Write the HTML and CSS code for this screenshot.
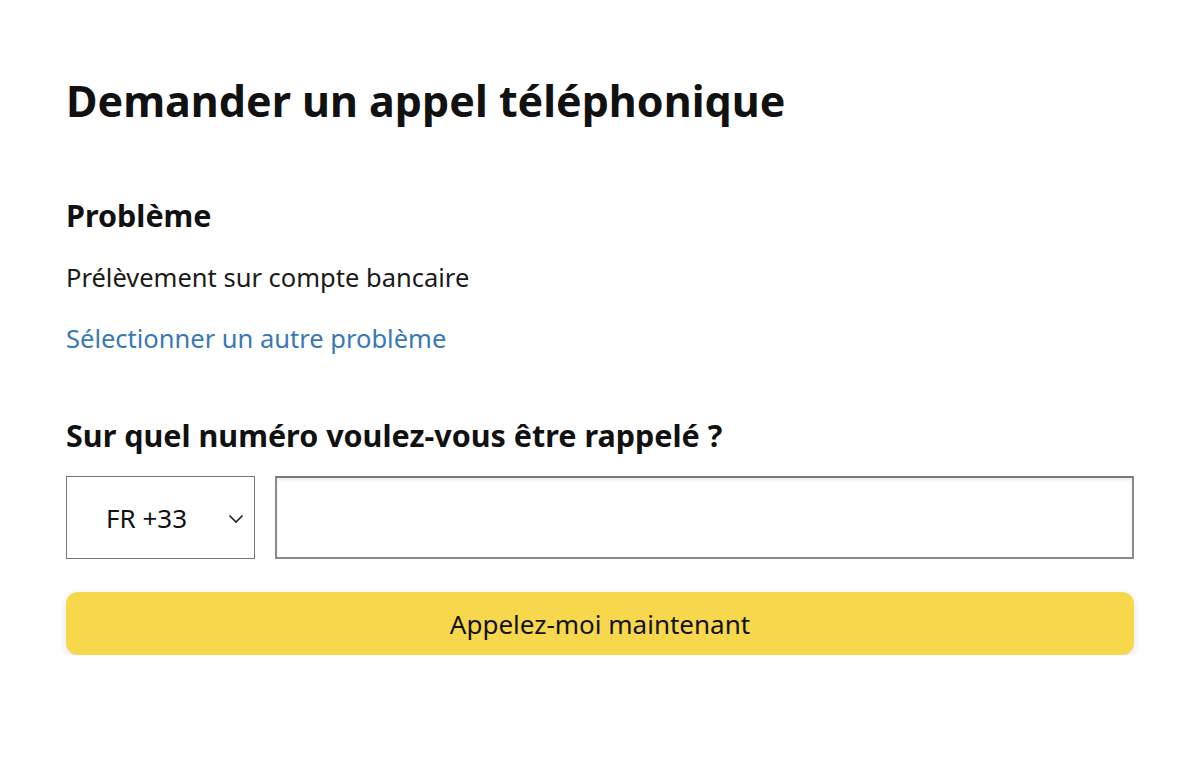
FILE: index.html
```html
<!DOCTYPE html>
<html lang="fr">
<head>
<meta charset="utf-8">
<link rel="stylesheet" href="styles.css">
</head>
<body>
<main class="page">
  <h1 class="title">Demander un appel téléphonique</h1>
  <section class="problem">
    <h2 class="subtitle">Problème</h2>
    <p class="text">Prélèvement sur compte bancaire</p>
    <a class="link" href="#">Sélectionner un autre problème</a>
  </section>
  <section class="phone">
    <h2 class="question">Sur quel numéro voulez-vous être rappelé ?</h2>
    <div class="row">
      <div class="select">
        <span class="code">FR +33</span>
        <svg class="chev" width="16" height="10" viewBox="0 0 16 10"><path d="M1.5 1.5 L8 8 L14.5 1.5" fill="none" stroke="#222" stroke-width="1.6"/></svg>
      </div>
      <div class="input"></div>
    </div>
    <button class="btn">Appelez-moi maintenant</button>
  </section>
</main>
</body>
</html>
```
FILE: styles.css
```css
* { box-sizing: border-box; }
html, body { margin: 0; padding: 0; background: #fff; }
body { font-family: "Noto Sans", "Open Sans", sans-serif; color: #111; }
.page { padding: 74px 66px 0 66px; width: 1200px; }
.title { margin: 0; font-size: 43px; font-weight: 700; line-height: 54px; color: #111; }
.problem { margin-top: 69px; }
.subtitle { margin: 0; font-size: 30.5px; font-weight: 700; line-height: 36px; }
.text { margin: 27px 0 0; font-size: 25.5px; line-height: 34px; color: #1a1a1a; }
.link { display: block; margin-top: 27px; font-size: 25.5px; line-height: 34px; color: #3a78b5; text-decoration: none; }
.phone { margin-top: 62px; }
.question { margin: 0; font-size: 30.5px; font-weight: 700; line-height: 36px; }
.row { display: flex; gap: 20px; margin-top: 23px; width: 1068px; }
.select { width: 189px; height: 83px; border: 1.5px solid #777; display: flex; align-items: center; justify-content: space-between; padding: 0 10px 0 39px; }
.code { font-size: 26px; color: #111; }
.chev { margin-top: 2px; }
.input { flex: 1; height: 83px; border: 2px solid #8a8a8a; border-top-color: #7a7a7a; box-shadow: inset 0 2px 3px rgba(0,0,0,0.08); }
.btn { display: block; margin-top: 33px; width: 1068px; height: 63px; border: none; border-radius: 12px; background: #f7d84c; box-shadow: 0 3px 8px rgba(0,0,0,0.12); font-family: inherit; font-size: 26px; color: #111; }
```
